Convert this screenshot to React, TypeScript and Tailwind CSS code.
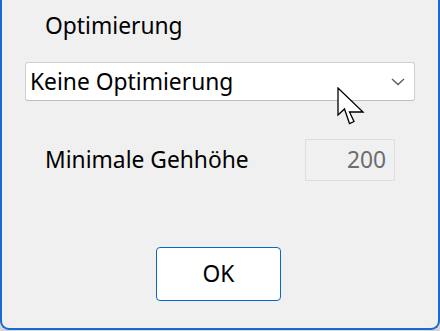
import React from "react";

export default function App() {
  return (
    <div
      className="relative w-[440px] h-[331px] bg-[#d6d6d6] overflow-hidden"
      style={{ fontFamily: '"Noto Sans", "Open Sans", sans-serif' }}
    >
      <div className="w-[440px] h-[330px] bg-[#f0f0f0] border-x-2 border-b-2 border-[#1a6ad2] rounded-b-[9px] flex flex-col text-[22.8px] leading-[24px] text-black">
        <div className="pt-[14px] pl-[43px]">Optimierung</div>

        <div className="mt-[24px] ml-[23px] w-[390px] h-[39px] bg-white border border-[#d0d0d0] border-b-[#bdbdbd] rounded-[3px] flex items-center pl-[4px] pr-[9px]">
          <span className="flex-1">Keine Optimierung</span>
          <svg width="14" height="8" viewBox="0 0 14 8">
            <path d="M1 1 L7 6.5 L13 1" fill="none" stroke="#5a5a5a" strokeWidth="1.3" />
          </svg>
        </div>

        <div className="mt-[38px] h-[42px] flex items-center pl-[43px] pr-[43px]">
          <span className="flex-1">Minimale Gehhöhe</span>
          <div className="w-[90px] h-[42px] border border-[#dedede] flex items-center justify-end pr-[8px] text-[#6d6d6d]">
            200
          </div>
        </div>

        <button className="mt-[66px] ml-[154px] w-[125px] h-[54px] bg-white border border-[#0a67c8] rounded-[4px] flex items-center justify-center text-[22.8px] leading-[24px] text-black">
          OK
        </button>
      </div>

      <svg
        className="absolute left-[337px] top-[87px]"
        width="28"
        height="40"
        viewBox="0 0 28 40"
      >
        <path
          d="M1 1 L1 28 L7.5 22 L12.5 36.5 L17 34.5 L12.5 25 L26 25 Z"
          fill="white"
          stroke="black"
          strokeWidth="1.3"
          strokeLinejoin="miter"
        />
      </svg>
    </div>
  );
}
